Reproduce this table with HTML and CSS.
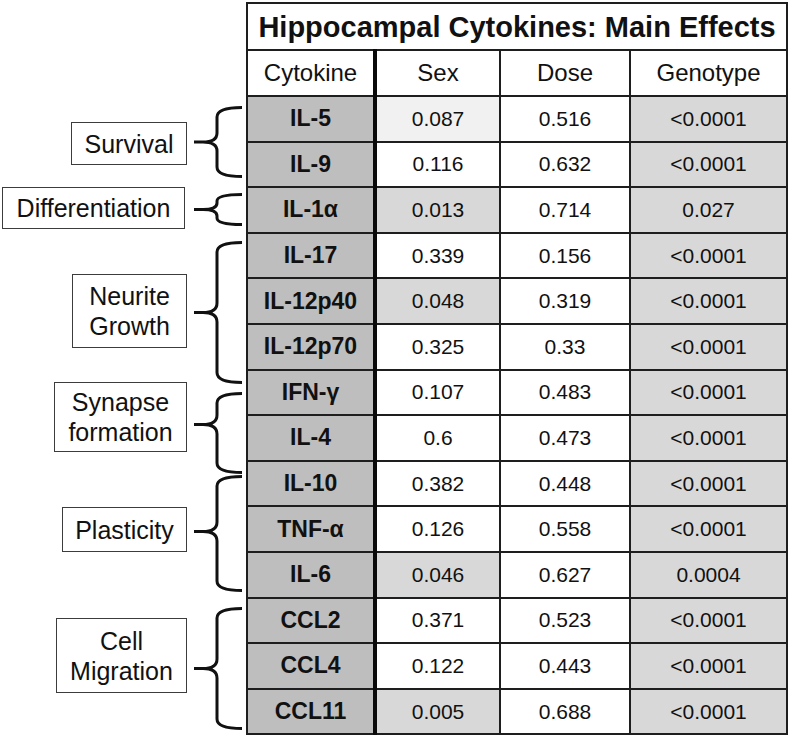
FILE: index.html
```html
<!DOCTYPE html>
<html>
<head>
<meta charset="utf-8">
<link rel="stylesheet" href="styles.css">
</head>
<body>
<div class="figure">
  <div class="annotations">
    <div class="group g-survival">
      <div class="label l-survival">Survival</div>
      <svg class="brace" width="50" height="72" viewBox="0 0 50 72"><path d="M49,1.5 Q24,1.5 24,11 L24,27 Q24,36 10,36 L1,36 M10,36 Q24,36 24,45 L24,61 Q24,70.5 49,70.5"/></svg>
    </div>
    <div class="group g-diff">
      <div class="label l-diff">Differentiation</div>
      <svg class="brace" width="50" height="33" viewBox="0 0 50 33"><path d="M49,1.5 Q24,1.5 24,8 L24,10 Q24,16.5 10,16.5 L1,16.5 M10,16.5 Q24,16.5 24,23 L24,25 Q24,31.5 49,31.5"/></svg>
    </div>
    <div class="group g-neurite">
      <div class="label l-neurite">Neurite<br>Growth</div>
      <svg class="brace" width="50" height="143" viewBox="0 0 50 143"><path d="M49,1.5 Q24,1.5 24,11 L24,62 Q24,71.5 10,71.5 L1,71.5 M10,71.5 Q24,71.5 24,81 L24,131.5 Q24,141.5 49,141.5"/></svg>
    </div>
    <div class="group g-synapse">
      <div class="label l-synapse">Synapse<br>formation</div>
      <svg class="brace" width="50" height="82" viewBox="0 0 50 82"><path d="M49,1.5 Q24,1.5 24,11 L24,23 Q24,32.5 10,32.5 L1,32.5 M10,32.5 Q24,32.5 24,42 L24,71 Q24,80.5 49,80.5"/></svg>
    </div>
    <div class="group g-plasticity">
      <div class="label l-plasticity">Plasticity</div>
      <svg class="brace" width="50" height="117" viewBox="0 0 50 117"><path d="M49,1.5 Q24,1.5 24,11 L24,47 Q24,56.5 10,56.5 L1,56.5 M10,56.5 Q24,56.5 24,66 L24,106 Q24,115.5 49,115.5"/></svg>
    </div>
    <div class="group g-cell">
      <div class="label l-cell">Cell<br>Migration</div>
      <svg class="brace" width="50" height="123" viewBox="0 0 50 123"><path d="M49,1.5 Q24,1.5 24,11 L24,52 Q24,61.5 10,61.5 L1,61.5 M10,61.5 Q24,61.5 24,71 L24,112 Q24,121.5 49,121.5"/></svg>
    </div>
  </div>

  <table class="effects">
    <colgroup>
      <col class="col-name"><col class="col-sex"><col class="col-dose"><col class="col-geno">
    </colgroup>
    <tr class="title-row"><th colspan="4">Hippocampal Cytokines: Main Effects</th></tr>
    <tr class="head-row"><th class="name">Cytokine</th><th>Sex</th><th>Dose</th><th>Genotype</th></tr>
    <tr><td class="name">IL-5</td><td class="trend">0.087</td><td>0.516</td><td class="sig">&lt;0.0001</td></tr>
    <tr><td class="name">IL-9</td><td>0.116</td><td>0.632</td><td class="sig">&lt;0.0001</td></tr>
    <tr><td class="name">IL-1α</td><td class="sig">0.013</td><td>0.714</td><td class="sig">0.027</td></tr>
    <tr><td class="name">IL-17</td><td>0.339</td><td>0.156</td><td class="sig">&lt;0.0001</td></tr>
    <tr><td class="name">IL-12p40</td><td class="sig">0.048</td><td>0.319</td><td class="sig">&lt;0.0001</td></tr>
    <tr><td class="name">IL-12p70</td><td>0.325</td><td>0.33</td><td class="sig">&lt;0.0001</td></tr>
    <tr><td class="name">IFN-γ</td><td>0.107</td><td>0.483</td><td class="sig">&lt;0.0001</td></tr>
    <tr><td class="name">IL-4</td><td>0.6</td><td>0.473</td><td class="sig">&lt;0.0001</td></tr>
    <tr><td class="name">IL-10</td><td>0.382</td><td>0.448</td><td class="sig">&lt;0.0001</td></tr>
    <tr><td class="name">TNF-α</td><td>0.126</td><td>0.558</td><td class="sig">&lt;0.0001</td></tr>
    <tr><td class="name">IL-6</td><td class="sig">0.046</td><td>0.627</td><td class="sig">0.0004</td></tr>
    <tr><td class="name">CCL2</td><td>0.371</td><td>0.523</td><td class="sig">&lt;0.0001</td></tr>
    <tr><td class="name">CCL4</td><td>0.122</td><td>0.443</td><td class="sig">&lt;0.0001</td></tr>
    <tr><td class="name">CCL11</td><td class="sig">0.005</td><td>0.688</td><td class="sig">&lt;0.0001</td></tr>
  </table>
</div>
</body>
</html>
```

FILE: styles.css
```css
* { box-sizing: border-box; }
html, body {
  margin: 0;
  padding: 0;
  background: #ffffff;
}
body {
  font-family: "Liberation Sans", Arial, sans-serif;
  color: #111111;
}
.figure {
  display: flex;
  align-items: flex-start;
  width: 790px;
  height: 738px;
}
.annotations {
  width: 246px;
  flex: none;
  display: flex;
  flex-direction: column;
}
.group {
  display: flex;
  align-items: flex-start;
  justify-content: flex-end;
  padding-right: 3px;
}
.brace {
  display: block;
  flex: none;
  margin-left: 6px;
}
.brace path {
  fill: none;
  stroke: #111111;
  stroke-width: 3;
  stroke-linecap: butt;
  stroke-linejoin: round;
}
.label {
  border: 1.5px solid #3c3c3c;
  font-size: 25px;
  line-height: 30px;
  text-align: center;
  display: flex;
  align-items: center;
  justify-content: center;
  flex: none;
  background: #ffffff;
}

.g-survival { margin-top: 106px; }
.l-survival { width: 116px; height: 43px; margin-top: 16px; }

.g-diff { margin-top: 9px; }
.g-diff .brace { margin-top: 6px; }
.l-diff { width: 183px; height: 42px; margin-right: 2px; }

.g-neurite { margin-top: 12px; }
.l-neurite { width: 115px; height: 74px; margin-top: 33px; }

.g-synapse { margin-top: -2px; }
.g-synapse .brace { margin-top: 10px; }
.l-synapse { width: 133px; height: 70px; }

.g-plasticity { margin-top: 1px; }
.l-plasticity { width: 125px; height: 45px; margin-top: 32px; }

.g-cell { margin-top: 15px; }
.l-cell { width: 131px; height: 75px; margin-top: 11px; }

/* table */
.effects {
  flex: none;
  margin-top: 2px;
  width: 540px;
  border-collapse: collapse;
  table-layout: fixed;
}
.col-name { width: 128px; }
.col-sex { width: 125px; }
.col-dose { width: 130px; }
.col-geno { width: 157px; }

.effects th,
.effects td {
  border: 2px solid #1e1e1e;
  padding: 0;
  text-align: center;
  vertical-align: middle;
  background: #ffffff;
  color: #111111;
}
.effects .title-row th {
  height: 47px;
  font-size: 29px;
  font-weight: bold;
  padding-top: 1px;
}
.effects .head-row th {
  height: 46px;
  font-size: 24px;
  font-weight: normal;
}
.effects td {
  height: 45.6px;
  font-size: 21px;
}
.effects .name {
  border-right: 4px solid #0a0a0a;
}
.effects td.name {
  background: #bebebe;
  font-weight: bold;
  font-size: 23px;
}
.effects td.sig {
  background: #d8d8d8;
}
.effects td.trend {
  background: #f1f1f1;
}
```
